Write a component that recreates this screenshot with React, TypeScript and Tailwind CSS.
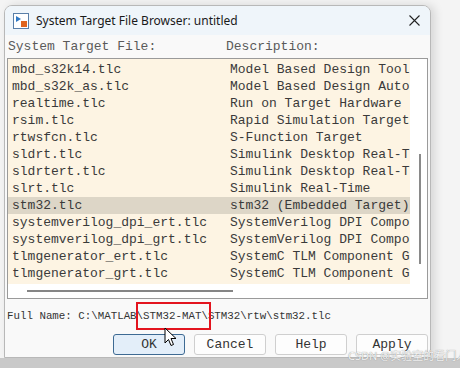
import React from 'react';

const rows: [string, string][] = [
  ['mbd_s32k14.tlc', 'Model Based Design Tool'],
  ['mbd_s32k_as.tlc', 'Model Based Design Auto'],
  ['realtime.tlc', 'Run on Target Hardware'],
  ['rsim.tlc', 'Rapid Simulation Target'],
  ['rtwsfcn.tlc', 'S-Function Target'],
  ['sldrt.tlc', 'Simulink Desktop Real-T'],
  ['sldrtert.tlc', 'Simulink Desktop Real-T'],
  ['slrt.tlc', 'Simulink Real-Time'],
  ['stm32.tlc', 'stm32 (Embedded Target)'],
  ['systemverilog_dpi_ert.tlc', 'SystemVerilog DPI Compo'],
  ['systemverilog_dpi_grt.tlc', 'SystemVerilog DPI Compo'],
  ['tlmgenerator_ert.tlc', 'SystemC TLM Component G'],
  ['tlmgenerator_grt.tlc', 'SystemC TLM Component G'],
];

const mono = "font-['Liberation_Mono','Courier_New',monospace]";

const TargetIcon = () => (
  <svg width="16" height="16" viewBox="0 0 16 16">
    <rect x="0.5" y="0.5" width="15" height="15" fill="#fff" stroke="#5a7fa8" />
    <path d="M3 3 L3 9 L8 6 Z" fill="#2f78c4" />
    <rect x="8" y="8" width="6" height="6" fill="#e0641e" />
  </svg>
);

const Cursor = () => (
  <svg width="13" height="21" viewBox="0 0 13 21">
    <path
      d="M1 1 L1 16 L4.5 12.5 L7 18.5 L9.5 17.5 L7 11.5 L12 11.5 Z"
      fill="#fff"
      stroke="#000"
      strokeWidth="1"
      strokeLinejoin="round"
    />
  </svg>
);

const Button = ({ label, primary }: { label: string; primary?: boolean }) => (
  <button
    className={`w-[72px] h-[21px] rounded-[3px] border text-[13px] text-[#333] ${mono} ${
      primary ? 'bg-[#e3eef9] border-[#3d6a93]' : 'bg-[#fdfdfd] border-[#cfcfcf]'
    }`}
  >
    {label}
  </button>
);

export default function App() {
  return (
    <div className="relative w-[460px] h-[368px] overflow-hidden bg-[#f4f4f4] flex flex-col">
      <div className="pl-[4px] pt-[5px] h-[358px]">
        <div className="w-[427px] h-[353px] rounded-t-[8px] border border-[#b8b8b8] bg-[#f9f9f9] shadow-[4px_0_10px_rgba(0,0,0,0.12)] flex flex-col overflow-hidden">
          {/* Title bar */}
          <div className="h-[29px] shrink-0 bg-[#eff5fa] flex items-center pl-[8px] pr-[10px]">
            <TargetIcon />
            <span className="ml-[7px] text-[12px] text-[#1a1a1a] font-['Noto_Sans','Open_Sans',sans-serif]">
              System Target File Browser: untitled
            </span>
            <svg className="ml-auto" width="11" height="11" viewBox="0 0 11 11">
              <path d="M0.5 0.5 L10.5 10.5 M10.5 0.5 L0.5 10.5" stroke="#222" strokeWidth="1.1" />
            </svg>
          </div>

          {/* Column headers */}
          <div className={`h-[23px] shrink-0 flex items-center text-[13px] text-[#5a5a5a] ${mono}`}>
            <span className="pl-[3px] w-[221px]">System Target File:</span>
            <span>Description:</span>
          </div>

          {/* List */}
          <div className="mx-[2px] h-[241px] border border-[#9a9a9a] bg-white flex">
            <div className="w-[402px] flex flex-col">
              <div className="pt-[2px] bg-[#fdf4e3] h-[225px]">
                {rows.map(([file, desc]) => (
                  <div
                    key={file}
                    className={`h-[17px] flex items-center whitespace-nowrap text-[13px] text-[#3a3a3a] ${mono} ${
                      file === 'stm32.tlc' ? 'bg-[#ddd6c7]' : ''
                    }`}
                  >
                    <span className="pl-[4px] w-[222px] shrink-0">{file}</span>
                    <span>{desc}</span>
                  </div>
                ))}
              </div>
              <div className="flex-1 flex items-center pl-[19px]">
                <div className="w-[206px] h-[2px] bg-[#858585]" />
              </div>
            </div>
            <div className="flex-1 pt-[95px] pl-[9px]">
              <div className="w-[2px] h-[110px] bg-[#8a8a8a]" />
            </div>
          </div>

          {/* Full name */}
          <div className={`h-[34px] shrink-0 flex items-center pl-[2px] text-[10.8px] text-[#333] ${mono}`}>
            <span>Full Name: C:\MATLAB</span>
            <span className="relative">
              \STM32-MAT\
              <span className="absolute left-[-1px] right-[-3px] top-[-6px] bottom-[-6px] border-2 border-[#e3141e]" />
            </span>
            <span>STM32\rtw\stm32.tlc</span>
          </div>

          {/* Buttons */}
          <div className="flex justify-end gap-[9px] pr-[2px] pt-[1px]">
            <Button label="OK" primary />
            <Button label="Cancel" />
            <Button label="Help" />
            <Button label="Apply" />
          </div>
        </div>
      </div>
      <div className="flex-1 bg-[#c9c9c9]" />

      {/* mouse cursor */}
      <div className="absolute left-[164px] top-[327px]">
        <Cursor />
      </div>

      {/* watermark */}
      <div className="absolute left-[348px] top-[349px] whitespace-nowrap text-[11px] leading-[14px] text-[#f4f4f4] font-['Noto_Sans','Noto_Sans_CJK_SC',sans-serif] [text-shadow:0_0_1px_#7a7a7a]">
        CSDN @实验室的看门人
      </div>
    </div>
  );
}
